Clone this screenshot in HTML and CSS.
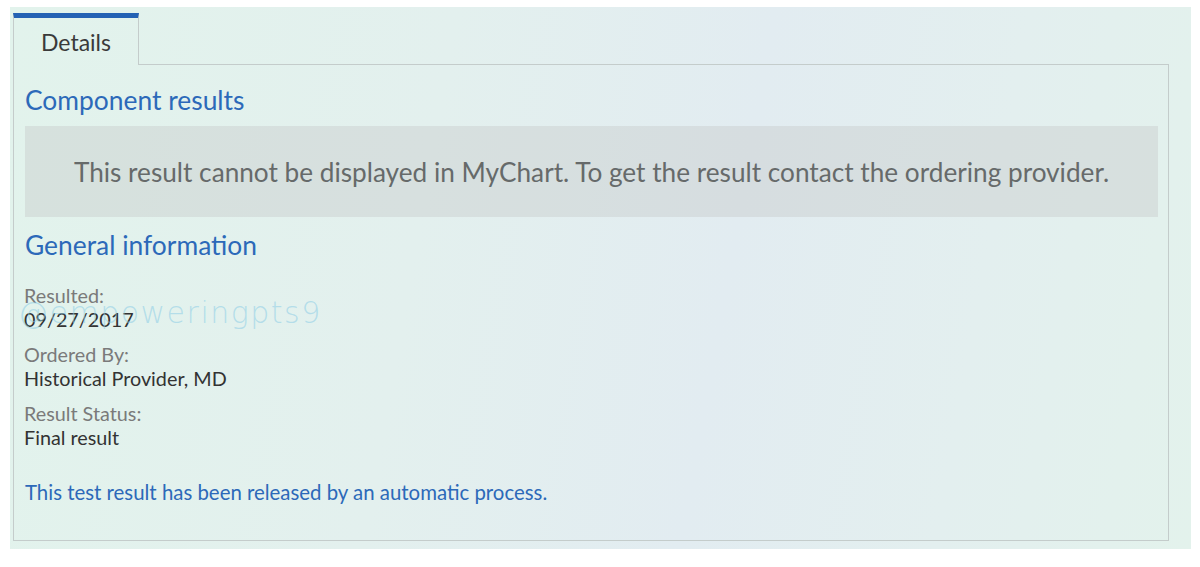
FILE: index.html
```html
<!DOCTYPE html>
<html>
<head>
<meta charset="utf-8">
<link rel="stylesheet" href="styles.css">
</head>
<body>
<div class="panel">
  <div class="tabs">
    <div class="tab">Details</div>
    <div class="tab-rest"></div>
  </div>
  <div class="frame">
    <h2 class="heading">Component results</h2>
    <div class="notice">This result cannot be displayed in MyChart. To get the result contact the ordering provider.</div>
    <h2 class="heading">General information</h2>
    <dl class="info">
      <dt>Resulted:</dt>
      <dd>09/27/2017</dd>
      <dt>Ordered By:</dt>
      <dd>Historical Provider, MD</dd>
      <dt>Result Status:</dt>
      <dd>Final result</dd>
    </dl>
    <p class="released">This test result has been released by an automatic process.</p>
    <div class="watermark">@empoweringpts9</div>
  </div>
</div>
</body>
</html>
```
FILE: styles.css
```css
html, body {
  margin: 0;
  padding: 0;
  background: #ffffff;
}
body {
  font-family: Lato, "Open Sans", sans-serif;
  width: 1200px;
  height: 567px;
  overflow: hidden;
}
.panel {
  margin: 7px 0 0 10px;
  width: 1181px;
  height: 542px;
  box-sizing: border-box;
  padding: 6px 22px 0 3px;
  background: linear-gradient(100deg, #e2f3ec 0%, #e3f0ee 35%, #e2ecf1 60%, #e3efef 80%, #e3f2ec 100%);
}
.tabs {
  display: flex;
  height: 52px;
}
.tab {
  width: 126px;
  box-sizing: border-box;
  border-top: 5px solid #2462b4;
  border-left: 1px solid #c4cccb;
  border-right: 1px solid #c4cccb;
  color: #3a3a3a;
  font-size: 23px;
  text-align: center;
  padding-top: 10px;
}
.tab-rest {
  flex: 1;
  border-bottom: 1px solid #c4cccb;
}
.frame {
  position: relative;
  height: 476px;
  box-sizing: border-box;
  border: 1px solid #c4cccb;
  border-top: none;
  padding: 20px 10px 0 11px;
}
.heading {
  margin: 0;
  font-weight: normal;
  font-size: 26.4px;
  color: #2c69b9;
  line-height: 30px;
}
.notice {
  margin: 11px 0 13px;
  height: 91px;
  display: flex;
  align-items: center;
  justify-content: center;
  background: rgba(200, 205, 205, 0.45);
  color: #666a6a;
  font-size: 26.2px;
}
.info {
  margin: 23px 0 0 -1px;
}
.info dt {
  color: #7a7a7a;
  font-size: 19.8px;
  line-height: 24px;
}
.info dd {
  margin: 0 0 11px;
  color: #333333;
  font-size: 19.8px;
  line-height: 24px;
}
.released {
  margin: 31px 0 0 0;
  color: #2c69b9;
  font-size: 20.4px;
  line-height: 24px;
}
.watermark {
  position: absolute;
  left: 4px;
  top: 230px;
  font-family: "DejaVu Sans", sans-serif;
  font-weight: 200;
  font-size: 30px;
  letter-spacing: 1.5px;
  color: rgba(140, 205, 230, 0.55);
}
```
